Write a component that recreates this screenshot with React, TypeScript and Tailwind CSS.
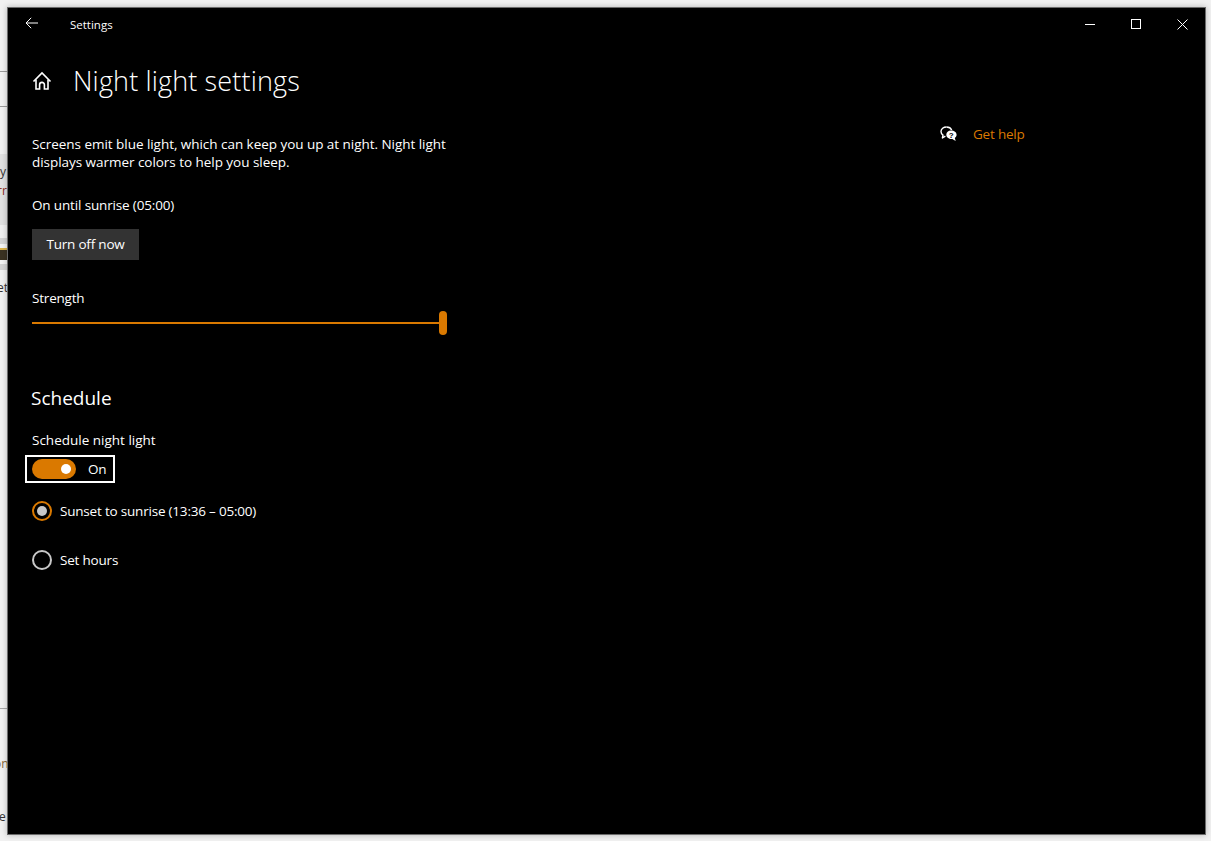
const ORANGE = "#da7900";

const HelpIcon = () => (
  <svg width="18" height="16" viewBox="0 0 18 16" fill="none">
    <path
      d="M6.5 1C3.5 1 1 3 1 5.6c0 1.5.8 2.8 2 3.6L2.4 12l3-1.9"
      stroke="white"
      strokeWidth="1.4"
      strokeLinejoin="round"
    />
    <path d="M6.5 1c2.4 0 4.4 1.2 5.2 3" stroke="white" strokeWidth="1.4" />
    <path
      d="M11 4.4c3.2 0 5.6 1.8 5.6 4.3 0 1.4-.7 2.5-1.8 3.2l.9 3-3.4-2c-3.2.3-6-1.6-6-4.2 0-2.4 2-4.3 4.7-4.3z"
      fill="white"
    />
    <text x="11" y="11.6" fontSize="8" fontWeight="700" textAnchor="middle" fill="black" fontFamily="Liberation Sans, sans-serif">
      ?
    </text>
  </svg>
);

const HomeIcon = () => (
  <svg width="20" height="20" viewBox="0 0 20 20" fill="none" stroke="white" strokeWidth="1.6" className="shrink-0">
    <path d="M1.5 10.5 10 2l8.5 8.5" />
    <path d="M4 8.5V18h3.6v-4.2a2.4 2.4 0 0 1 4.8 0V18H16V8.5" />
  </svg>
);

const Radio = ({ checked, label }: { checked?: boolean; label: string }) => (
  <div className="flex items-center h-5">
    <span
      className={
        checked
          ? "w-5 h-5 rounded-full border-2 border-[#da7900] flex items-center justify-center"
          : "w-5 h-5 rounded-full border-2 border-[#c8c8c8] flex items-center justify-center"
      }
    >
      {checked && <span className="w-[10px] h-[10px] rounded-full bg-[#c8c8c8]" />}
    </span>
    <span className="ml-2 text-white">{label}</span>
  </div>
);

const DesktopBehind = () => (
  <div className="w-[7px] h-[841px] shrink-0 overflow-hidden flex flex-col text-[12px] leading-[14px] text-[#333] bg-[#f1f1f1]">
    <div className="h-[71px]" />
    <div className="h-px bg-[#9a9a9a]" />
    <div className="h-[34px]" />
    <div className="h-px bg-[#9a9a9a]" />
    <div className="h-[47px]" />
    <div className="h-[71px] bg-[#e2e2e2] pt-[11px] flex flex-col gap-[5px] items-start">
      <span>y</span>
      <span className="text-[#8a2b1a] -ml-[3px]">rr</span>
    </div>
    <div className="h-[13px]" />
    <div className="h-[32px] bg-[#d4d4d4] py-[6px]">
      <div className="h-[20px] bg-[#f4f4f4] flex items-center">
        <span className="w-[7px] h-[12px] bg-[#3a3222] border-t-2 border-[#d9b24a]" />
      </div>
    </div>
    <div className="h-[11px]" />
    <span className="-ml-[3px]">et</span>
    <div className="h-[413px]" />
    <div className="h-px bg-[#a8a8a8]" />
    <div className="h-[48px]" />
    <span className="-ml-[6px] text-[#8a6a3a]">on</span>
    <div className="h-[39px]" />
    <span className="-ml-[1px]">e</span>
  </div>
);

const App = () => {
  return (
    <div
      className="flex w-[1211px] h-[841px] overflow-hidden bg-[#f1f1f1]"
      style={{ fontFamily: '"Open Sans", "Noto Sans", sans-serif' }}
    >
      <DesktopBehind />
      <div className="mt-[7px] w-[1199px] h-[828px] bg-black border border-[#6b6b6b] flex flex-col shadow-[0_0_6px_rgba(0,0,0,0.25)]">
        {/* Title bar */}
        <div className="flex items-center h-[32px] shrink-0 text-white">
          <div className="w-[48px] flex justify-center pb-[2px]">
            <svg width="14" height="12" viewBox="0 0 14 12" fill="none" stroke="white" strokeWidth="1">
              <path d="M13 6H1M6.2 .8 1 6l5.2 5.2" />
            </svg>
          </div>
          <span className="ml-[14px] pt-[2px] text-[11.5px]">Settings</span>
          <div className="ml-auto flex h-full">
            <div className="w-[46px] flex items-center justify-center">
              <span className="w-[10px] h-px bg-white" />
            </div>
            <div className="w-[46px] flex items-center justify-center">
              <span className="w-[10px] h-[10px] border border-white" />
            </div>
            <div className="w-[46px] flex items-center justify-center">
              <svg width="11" height="11" viewBox="0 0 11 11" stroke="white" strokeWidth="1">
                <path d="M.5 .5l10 10M10.5 .5l-10 10" />
              </svg>
            </div>
          </div>
        </div>

        <div className="flex flex-1 text-[13.5px] tracking-[-0.2px]">
          {/* Main column */}
          <div className="w-[932px] pl-[24px] text-white">
            <div className="flex items-center h-[44px] mt-[19px]">
              <HomeIcon />
              <h1 className="ml-[21px] pb-[2px] text-[27px] tracking-[0.15px] font-light leading-none">Night light settings</h1>
            </div>

            <p className="mt-[32px] w-[430px] leading-[18px] tracking-[-0.04px]">
              Screens emit blue light, which can keep you up at night. Night light displays warmer colors to help you sleep.
            </p>
            <p className="mt-[25px] leading-[18px] tracking-[-0.15px]">On until sunrise (05:00)</p>
            <button className="block mt-[15px] w-[107px] h-[31px] bg-[#333333] text-white">
              Turn off now
            </button>
            <p className="mt-[29px] leading-[18px]">Strength</p>

            <div className="relative mt-[4px] w-[415px] h-[24px] flex items-center">
              <div className="w-full h-[2px] bg-[#da7900]" />
              <span className="absolute right-0 top-0 w-[8px] h-[24px] rounded-full bg-[#da7900]" />
            </div>

            <h2 className="mt-[50px] -ml-px text-[19px] tracking-normal leading-[26px]">Schedule</h2>
            <p className="mt-[20px] leading-[18px] tracking-normal">Schedule night light</p>

            <div className="mt-[6px] -ml-[7px] w-[90px] h-[28px] border-2 border-white flex items-center pl-[5px]">
              <span className="w-[44px] h-[20px] rounded-full bg-[#da7900] flex items-center justify-end pr-[5px]">
                <span className="w-[10px] h-[10px] rounded-full bg-white" />
              </span>
              <span className="ml-[12px]">On</span>
            </div>

            <div className="mt-[18px] flex flex-col gap-[29px]">
              <Radio checked label="Sunset to sunrise (13:36 – 05:00)" />
              <Radio label="Set hours" />
            </div>
          </div>

          {/* Help column */}
          <div className="pt-[84px] flex items-start">
            <div className="flex items-center h-[20px]">
              <HelpIcon />
              <span className="ml-[15px]" style={{ color: ORANGE }}>
                Get help
              </span>
            </div>
          </div>
        </div>
      </div>
    </div>
  );
};

export default App;
